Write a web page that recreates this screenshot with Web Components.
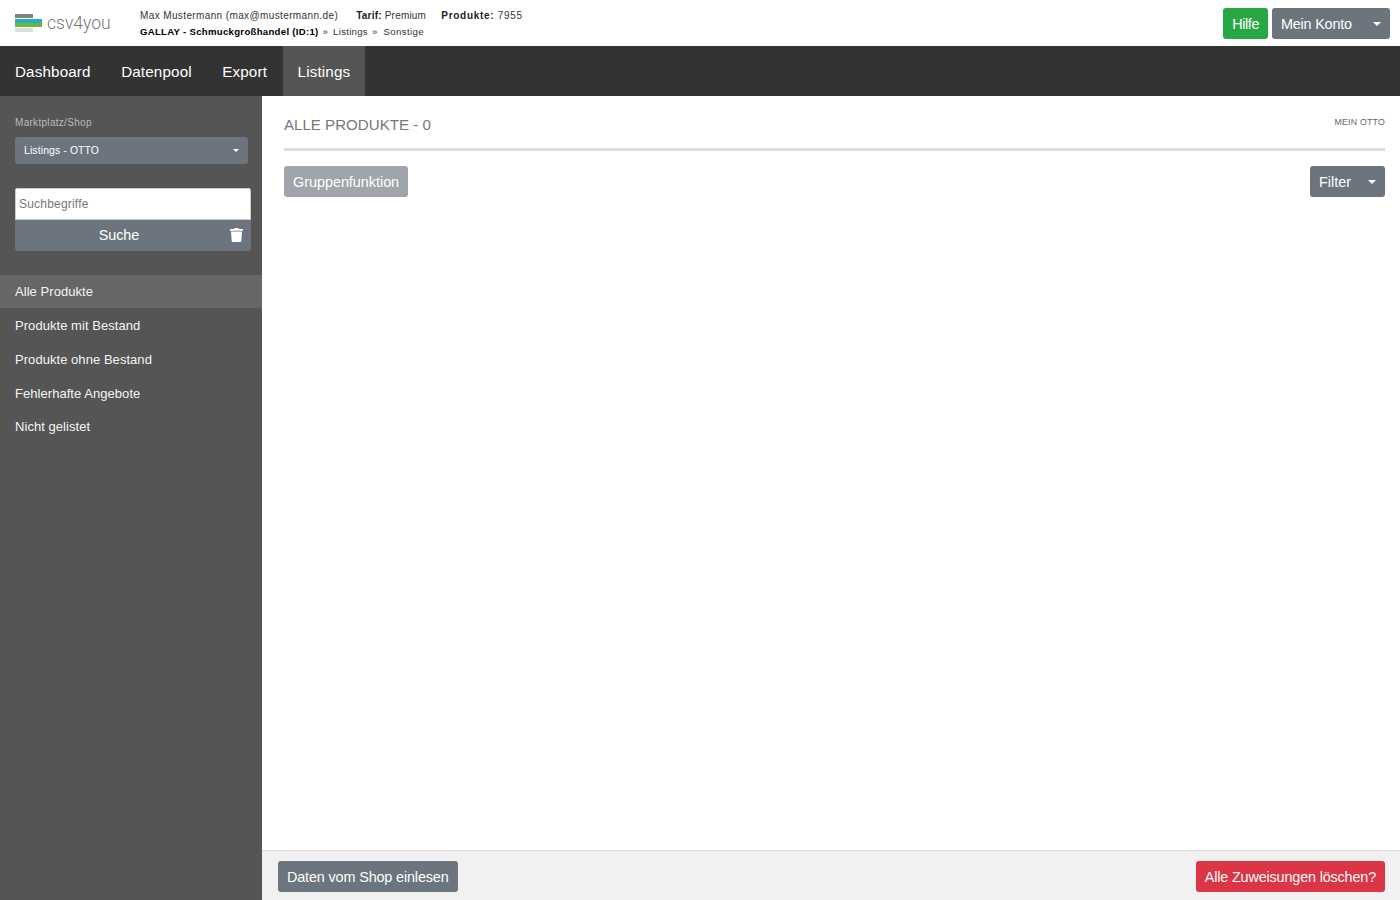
<!DOCTYPE html>
<html lang="de">
<head>
<meta charset="utf-8">
<title>csv4you</title>
<style>
  html, body { margin: 0; height: 100%; }
  body { font-family: "Liberation Sans", Arial, sans-serif; overflow: hidden; }
</style>
</head>
<body>
<app-shell>
  <top-bar slot="top"></top-bar>
  <main-nav slot="nav"></main-nav>
  <side-bar slot="side"></side-bar>
  <product-panel slot="main"></product-panel>
  <foot-bar slot="foot"></foot-bar>
</app-shell>

<script>
const BTN_CSS = `
  .btn {
    display: inline-flex;
    align-items: center;
    box-sizing: border-box;
    height: 31px;
    padding: 0 9px;
    border: 0;
    border-radius: 3px;
    background: #6c757d;
    color: #fff;
    font: 14.4px "Liberation Sans", Arial, sans-serif;
    white-space: nowrap;
  }
  .caret {
    display: inline-block;
    width: 0;
    height: 0;
    border-top: 4px solid #fff;
    border-left: 4px solid transparent;
    border-right: 4px solid transparent;
  }
`;

class AppShell extends HTMLElement {
  constructor() {
    super();
    this.shadowDOM = this.attachShadow({ mode: "open" });
    this.shadowDOM.innerHTML = `
    <style>
      :host { display: grid; grid-template: 46px 50px 1fr 50px / 262px 1fr; height: 900px; }
      .top { grid-column: 1 / 3; }
      .nav { grid-column: 1 / 3; }
      .side { grid-row: 3 / 5; }
    </style>
    <div class="top"><slot name="top"></slot></div>
    <div class="nav"><slot name="nav"></slot></div>
    <div class="side"><slot name="side"></slot></div>
    <div class="main"><slot name="main"></slot></div>
    <div class="foot"><slot name="foot"></slot></div>
    `;
  }
}

class TopBar extends HTMLElement {
  constructor() {
    super();
    this.shadowDOM = this.attachShadow({ mode: "open" });
    this.shadowDOM.innerHTML = `
    <style>
      ${BTN_CSS}
      :host { display: flex; height: 46px; box-sizing: border-box; background: #fff; color: #333; }
      .logo { display: flex; width: 140px; padding: 14px 0 0 15px; box-sizing: border-box; }
      .logo svg { display: block; flex: none; }
      .logo span { margin: -2px 0 0 4px; font: 300 17.500px/22px Roboto, sans-serif; color: #777; }
      .info { font-size: 10px; letter-spacing: .38px; padding-top: 8px; line-height: 16px; color: #333; }
      .info b { color: #222; }
      .tarif { margin-left: 15px; letter-spacing: .2px; }
      .prod { margin-left: 12px; letter-spacing: .7px; }
      .second { font-size: 9.6px; letter-spacing: .29px; }
      .second b { color: #000; }
      .second i { font-style: normal; margin: 0 2px 0 1px; }
      .second i.last { margin: 0 3px 0 1px; }
      .second span { letter-spacing: .4px; }
      .actions { margin-left: auto; display: flex; gap: 4px; padding: 8px 10px 0 0; }
      .green { background: #28a745; letter-spacing: -.4px; }
      .konto { width: 118px; justify-content: space-between; padding-right: 9px; letter-spacing: -.2px; }
    </style>
    <div class="logo">
      <svg width="28" height="18" viewBox="0 0 28 18">
        <rect x="0" y="0" width="18" height="4" fill="#808080"/>
        <rect x="0" y="5" width="27" height="4" fill="#1fb0c4"/>
        <rect x="0" y="9" width="27" height="4" fill="#6fb63f"/>
        <rect x="0" y="14" width="18" height="4" fill="#dcdfdb"/>
      </svg>
      <span>csv4you</span>
    </div>
    <div class="info">
      <div>Max Mustermann (max@mustermann.de) <span class="tarif"><b>Tarif:</b> Premium</span> <span class="prod"><b>Produkte:</b> 7955</span></div>
      <div class="second"><b>GALLAY - Schmuckgroßhandel (ID:1)</b> <i>»</i> Listings <i class="last">»</i> <span>Sonstige</span></div>
    </div>
    <div class="actions">
      <span class="btn green">Hilfe</span>
      <span class="btn konto">Mein Konto <i class="caret"></i></span>
    </div>
    `;
  }
}

class MainNav extends HTMLElement {
  constructor() {
    super();
    this.shadowDOM = this.attachShadow({ mode: "open" });
    const items = ["Dashboard", "Datenpool", "Export", "Listings"];
    this.shadowDOM.innerHTML = `
    <style>
      :host { display: flex; height: 50px; background: #333; color: #fff; font-size: 15.2px; letter-spacing: .15px; }
      a { display: flex; align-items: center; padding: 0 15px; margin-right: .5px; }
      a.on { background: #555; }
    </style>
    ${items.map((t) => `<a class="${t === "Listings" ? "on" : ""}">${t}</a>`).join("")}
    `;
  }
}

class SideBar extends HTMLElement {
  constructor() {
    super();
    this.shadowDOM = this.attachShadow({ mode: "open" });
    const items = ["Alle Produkte", "Produkte mit Bestand", "Produkte ohne Bestand", "Fehlerhafte Angebote", "Nicht gelistet"];
    this.shadowDOM.innerHTML = `
    <style>
      ${BTN_CSS}
      :host { display: block; height: 100%; box-sizing: border-box; background: #555; color: #fff; padding-top: 21px; }
      .label { margin-left: 15px; font-size: 10px; letter-spacing: .3px; line-height: 12px; color: #bbb; }
      .select { display: flex; margin: 8px 14px 0 15px; height: 27px; justify-content: space-between; font-size: 10.4px; letter-spacing: .13px; padding-right: 9px; }
      .caret { border-top-width: 3px; border-left-width: 3px; border-right-width: 3px; }
      .search { margin: 24px 11px 0 15px; }
      .input { box-sizing: border-box; height: 32px; background: #fff; border: 1px solid #ccc; border-radius: 2px 2px 0 0; padding-left: 3px; display: flex; align-items: center; font-size: 12px; letter-spacing: .2px; color: #777; }
      .go { display: flex; position: relative; width: 100%; justify-content: center; padding: 0 37px 2px 9px; border-radius: 0 0 3px 3px; letter-spacing: -.05px; }
      .go svg { position: absolute; right: 8px; top: 8px; }
      ul { list-style: none; margin: 24px 0 0; padding: 0; font-size: 13px; letter-spacing: .05px; }
      li { box-sizing: border-box; height: 34px; padding: 0 0 1px 15px; display: flex; align-items: center; color: #f4f4f4; }
      li.on { background: #666; height: 33px; margin-bottom: 1px; }
      li:last-child { margin-top: -1px; }
    </style>
    <div class="label">Marktplatz/Shop</div>
    <div class="select btn"><span>Listings - OTTO</span><i class="caret"></i></div>
    <div class="search">
      <div class="input">Suchbegriffe</div>
      <div class="go btn">Suche
        <svg width="13" height="14" viewBox="0 0 13 14"><path fill="#fff" d="M4.500 0h4l.6 1h3.900v1.800H0V1h3.900zM1 3.600h11l-.7 9.400a1 1 0 0 1-1 1H2.700a1 1 0 0 1-1-1z"/></svg>
      </div>
    </div>
    <ul>${items.map((t, i) => `<li class="${i === 0 ? "on" : ""}">${t}</li>`).join("")}</ul>
    `;
  }
}

class ProductPanel extends HTMLElement {
  constructor() {
    super();
    this.shadowDOM = this.attachShadow({ mode: "open" });
    this.shadowDOM.innerHTML = `
    <style>
      ${BTN_CSS}
      :host { display: block; height: 100%; box-sizing: border-box; padding: 0 15px 0 22px; background: #fff; }
      .head { display: flex; justify-content: space-between; height: 55px; box-sizing: border-box; border-bottom: 3px solid #ddd; padding-top: 20px; }
      h1 { margin: 0; font-size: 15.100px; font-weight: 400; line-height: 18px; color: #777; }
      .sub { font-size: 8.8px; letter-spacing: .2px; line-height: 12px; color: #666; }
      .bar { display: flex; justify-content: space-between; margin-top: 15px; }
      .muted { background: #9fa5aa; letter-spacing: -.02px; }
      .filter { width: 75px; justify-content: space-between; padding-right: 9px; }
    </style>
    <div class="head">
      <h1>ALLE PRODUKTE - 0</h1>
      <div class="sub">MEIN OTTO</div>
    </div>
    <div class="bar">
      <span class="btn muted">Gruppenfunktion</span>
      <span class="btn filter">Filter <i class="caret"></i></span>
    </div>
    `;
  }
}

class FootBar extends HTMLElement {
  constructor() {
    super();
    this.shadowDOM = this.attachShadow({ mode: "open" });
    this.shadowDOM.innerHTML = `
    <style>
      ${BTN_CSS}
      :host { display: flex; justify-content: space-between; align-items: flex-start; height: 50px; box-sizing: border-box; padding: 10px 15px 0 16px; background: #f1f1f1; border-top: 1px solid #ddd; }
      .btn { letter-spacing: -.14px; }
      .red { background: #dc3545; letter-spacing: -.16px; }
    </style>
    <span class="btn">Daten vom Shop einlesen</span>
    <span class="btn red">Alle Zuweisungen löschen?</span>
    `;
  }
}

customElements.define("app-shell", AppShell);
customElements.define("top-bar", TopBar);
customElements.define("main-nav", MainNav);
customElements.define("side-bar", SideBar);
customElements.define("product-panel", ProductPanel);
customElements.define("foot-bar", FootBar);
</script>
</body>
</html>
